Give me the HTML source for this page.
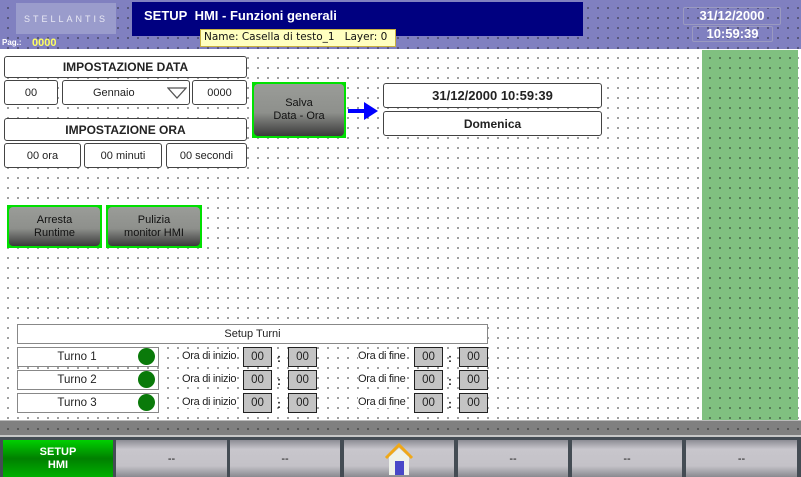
<!DOCTYPE html>
<html><head><meta charset="utf-8"><style>
*{margin:0;padding:0;box-sizing:border-box}
body{width:801px;height:477px;position:relative;overflow:hidden;background:#fff;font-family:"Liberation Sans",sans-serif;font-size:11px;color:#222}
.a{position:absolute}
.dots{background-image:radial-gradient(circle,#222 0.6px,transparent 0.9px);background-size:10px 10px;background-position:3px 3px}
.box{position:absolute;background:#fff;border:1px solid #444;border-radius:3px;display:flex;align-items:center;justify-content:center}
.b{font-weight:bold}
.btn{position:absolute;background:#00e000;padding:2px}
.btn div{width:100%;height:100%;border-radius:4px;background:linear-gradient(#9a9c98 0%,#8e908c 55%,#3a3a3a 100%);display:flex;align-items:center;justify-content:center;text-align:center;color:#111;font-size:11px;line-height:13px}
.t{position:absolute;background:#fff;border:1px solid #888;display:flex;align-items:center;justify-content:center;font-size:11.5px}
.g{position:absolute;background:#c4c4c4;border:1px solid #222;width:29px;height:20px;display:flex;align-items:center;justify-content:center;font-size:11.5px}
.dot{position:absolute;width:17px;height:17px;border-radius:50%;background:#0a7a0a}
.lbl{position:absolute;font-size:11px;letter-spacing:-0.3px;background:#fff}
.nav{position:absolute;top:440px;height:37px;background:linear-gradient(#8c8c94 0%,#c8c6cc 25%,#c4c2c8 70%,#8a8a90 100%);display:flex;align-items:center;justify-content:center;font-size:11px;color:#111}
</style></head><body>
<div class="a dots" style="left:0;top:0;width:801px;height:420px"></div>
<div class="a dots" style="left:0;top:0;width:801px;height:49px;background-color:#8080c0"></div>
<div class="a" style="left:16px;top:3px;width:100px;height:31px;background:#9a9ccc;color:#e8e8f4;font-size:9px;letter-spacing:3px;display:flex;align-items:center;justify-content:center">STELLANTIS</div>
<div class="a b" style="left:132px;top:2px;width:451px;height:34px;background:#000080;color:#fff;font-size:13px;padding:6px 0 0 12px">SETUP&nbsp; HMI - Funzioni generali</div>
<div class="a" style="left:200px;top:29px;width:196px;height:18px;background:#ffffc0;border:1px solid #c8b040;padding:1px 0 0 3px;color:#111;font-family:'DejaVu Sans',sans-serif;font-size:10.5px">Name: Casella di testo_1&nbsp;&nbsp; Layer: 0</div>
<div class="a b" style="left:2px;top:38px;color:#fff;font-size:8px">Pag.:</div>
<div class="a b" style="left:32px;top:37px;color:#ffff60;font-size:11px">0000</div>
<div class="a b" style="left:683px;top:7px;width:98px;height:18px;border:1px solid #9a9ac0;border-radius:2px;color:#fff;font-size:13px;text-align:center">31/12/2000</div>
<div class="a b" style="left:692px;top:26px;width:81px;height:16px;border:1px solid #9a9ac0;border-radius:2px;color:#fff;font-size:13px;text-align:center;line-height:14px">10:59:39</div>
<div class="a dots" style="left:702px;top:50px;width:96px;height:370px;background-color:#80c080"></div>

<div class="box b" style="left:4px;top:56px;width:243px;height:22px;font-size:12px">IMPOSTAZIONE DATA</div>
<div class="box" style="left:4px;top:80px;width:54px;height:25px">00</div>
<div class="box" style="left:62px;top:80px;width:128px;height:25px;justify-content:flex-start;padding-left:30px">Gennaio
<svg class="a" style="left:104px;top:6px" width="20" height="12"><path d="M1 1 L19 1 L10 11 Z" fill="none" stroke="#555" stroke-width="1.3"/></svg></div>
<div class="box" style="left:192px;top:80px;width:55px;height:25px">0000</div>
<div class="box b" style="left:4px;top:118px;width:243px;height:23px;font-size:12px">IMPOSTAZIONE ORA</div>
<div class="box" style="left:4px;top:143px;width:77px;height:25px">00 ora</div>
<div class="box" style="left:84px;top:143px;width:78px;height:25px">00 minuti</div>
<div class="box" style="left:166px;top:143px;width:81px;height:25px">00 secondi</div>

<div class="btn" style="left:252px;top:82px;width:94px;height:56px"><div>Salva<br>Data - Ora</div></div>
<svg class="a" style="left:347px;top:100px" width="32" height="22"><path d="M1 9 H17 V2 L31 11 L17 20 V13 H1 Z" fill="#0000ff"/></svg>
<div class="box b" style="left:383px;top:83px;width:219px;height:25px;font-size:13px">31/12/2000 10:59:39</div>
<div class="box b" style="left:383px;top:111px;width:219px;height:25px;font-size:12px">Domenica</div>

<div class="btn" style="left:7px;top:205px;width:95px;height:43px"><div>Arresta<br>Runtime</div></div>
<div class="btn" style="left:106px;top:205px;width:96px;height:43px"><div>Pulizia<br>monitor HMI</div></div>

<div class="t" style="left:17px;top:324px;width:471px;height:20px;font-size:11px">Setup Turni</div>
<div class="t" style="left:17px;top:347px;width:142px;height:20px;padding-right:22px">Turno 1</div>
<div class="t" style="left:17px;top:370px;width:142px;height:20px;padding-right:22px">Turno 2</div>
<div class="t" style="left:17px;top:393px;width:142px;height:20px;padding-right:22px">Turno 3</div>
<div class="dot" style="left:138px;top:348px"></div>
<div class="dot" style="left:138px;top:371px"></div>
<div class="dot" style="left:138px;top:394px"></div>
<div class="lbl" style="left:182px;top:350px">Ora di inizio</div>
<div class="lbl" style="left:182px;top:373px">Ora di inizio</div>
<div class="lbl" style="left:182px;top:396px">Ora di inizio</div>
<div class="lbl" style="left:358px;top:350px">Ora di fine</div>
<div class="lbl" style="left:358px;top:373px">Ora di fine</div>
<div class="lbl" style="left:358px;top:396px">Ora di fine</div>
<div class="g" style="left:243px;top:347px">00</div><div class="g" style="left:288px;top:347px">00</div>
<div class="g" style="left:243px;top:370px">00</div><div class="g" style="left:288px;top:370px">00</div>
<div class="g" style="left:243px;top:393px">00</div><div class="g" style="left:288px;top:393px">00</div>
<div class="g" style="left:414px;top:347px">00</div><div class="g" style="left:459px;top:347px">00</div>
<div class="g" style="left:414px;top:370px">00</div><div class="g" style="left:459px;top:370px">00</div>
<div class="g" style="left:414px;top:393px">00</div><div class="g" style="left:459px;top:393px">00</div>
<div class="a b" style="left:277px;top:351px;font-size:12px">:</div><div class="a b" style="left:277px;top:374px;font-size:12px">:</div><div class="a b" style="left:277px;top:397px;font-size:12px">:</div>
<div class="a b" style="left:448px;top:351px;font-size:12px">:</div><div class="a b" style="left:448px;top:374px;font-size:12px">:</div><div class="a b" style="left:448px;top:397px;font-size:12px">:</div>

<div class="a dots" style="left:0;top:420px;width:801px;height:17px;background-color:#808080;border-top:1px solid #bbb;border-bottom:2px solid #c8c8c8"></div>
<div class="a" style="left:0;top:437px;width:801px;height:40px;background:#444c54"></div>
<div class="a b" style="left:3px;top:440px;width:110px;height:37px;background:linear-gradient(#00d000,#008000 50%,#00b000);color:#fff;font-size:11px;text-align:center;line-height:13px;padding-top:6px">SETUP<br>HMI</div>
<div class="nav" style="left:116px;width:111px">--</div>
<div class="nav" style="left:230px;width:110px">--</div>
<div class="nav" style="left:344px;width:110px"><svg width="36" height="34"><path d="M5 16 L18 3 L31 16" fill="none" stroke="#f0a818" stroke-width="3"/><path d="M8 15 L18 6 L28 15 V33 H8 Z" fill="#eef2ea"/><rect x="14" y="19" width="9" height="14" fill="#4848c8"/></svg></div>
<div class="nav" style="left:458px;width:110px">--</div>
<div class="nav" style="left:572px;width:110px">--</div>
<div class="nav" style="left:686px;width:111px">--</div>
</body></html>
